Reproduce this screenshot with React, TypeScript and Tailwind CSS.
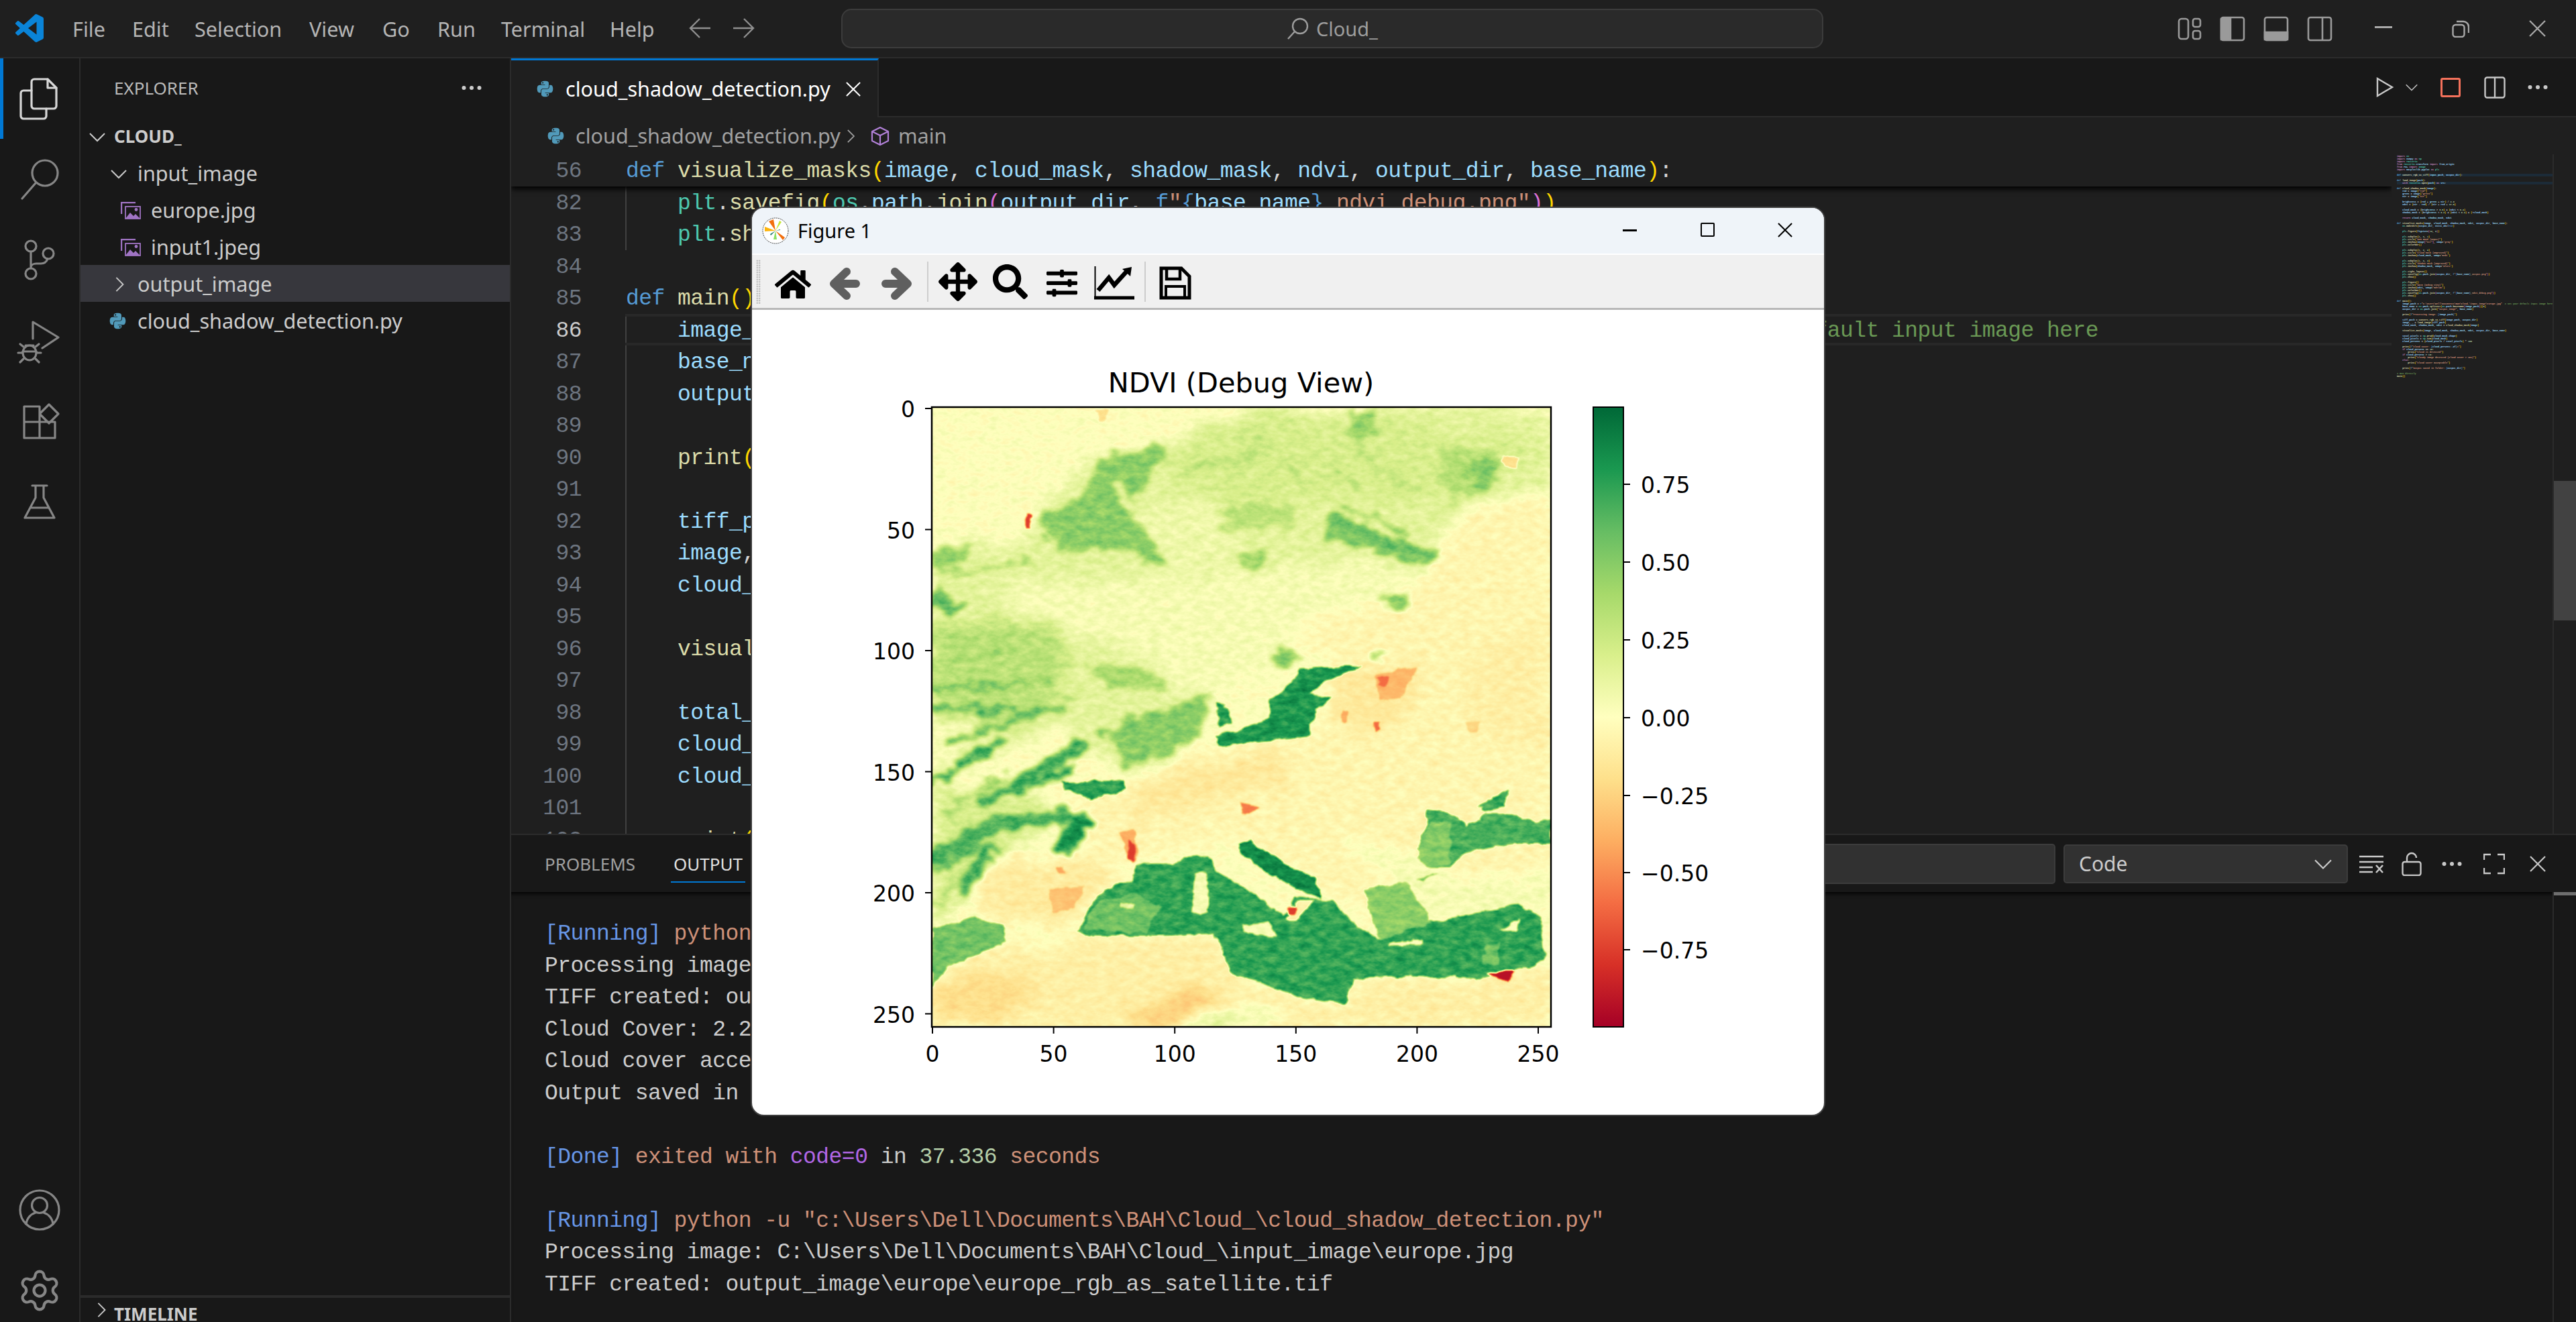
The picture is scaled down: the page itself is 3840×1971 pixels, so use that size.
import { FaPython, FaHome, FaArrowsAlt, FaSearch, FaSlidersH } from 'react-icons/fa';
import { Settings } from 'lucide-react';
import type { ReactNode } from 'react';

const minimapCode = `import os
import numpy as np
import rasterio
from rasterio.transform import from_origin
from PIL import Image
import matplotlib.pyplot as plt

def convert_rgb_to_tiff(input_path, output_dir):

def load_image(path):
    with rasterio.open(path) as src:

def cloud_shadow_mask(image):
    red = image["red"]
    green = image["green"]
    nir = image["nir"]

    brightness = (red + green + nir) / 3.0
    ndvi = (nir - red) / (nir + red + 1e-6)

    cloud_mask = (brightness > 0.8) & (ndvi < 0.2)
    shadow_mask = (brightness < 0.2) & (ndvi < 0.2) & (~cloud_mask)

    return cloud_mask, shadow_mask, ndvi

def visualize_masks(image, cloud_mask, shadow_mask, ndvi, output_dir, base_name):
    os.makedirs(output_dir, exist_ok=True)

    plt.figure(figsize=(12, 9))

    plt.subplot(1, 3, 1)
    plt.title("NIR Band (Input)")
    plt.imshow(image["nir"], cmap='gray')
    plt.colorbar()

    plt.subplot(1, 3, 2)
    plt.title("Cloud Mask (Improved)")
    plt.imshow(cloud_mask, cmap='Reds')

    plt.subplot(1, 3, 3)
    plt.title("Shadow Mask (Improved)")
    plt.imshow(shadow_mask, cmap='Blues')

    plt.tight_layout()
    plt.savefig(os.path.join(output_dir, f"{base_name}_output.png"))
    plt.show()

    plt.figure()
    plt.title("NDVI (Debug View)")
    plt.imshow(ndvi, cmap='RdYlGn')
    plt.colorbar()
    plt.savefig(os.path.join(output_dir, f"{base_name}_ndvi_debug.png"))
    plt.show()

def main():
    image_path = r"C:\\Users\\Dell\\Documents\\BAH\\Cloud_\\input_image\\europe.jpg"  # Set your default input image here
    base_name = os.path.splitext(os.path.basename(image_path))[0]
    output_dir = os.path.join("output_image", base_name)

    print(f"Processing image: {image_path}")

    tiff_path = convert_rgb_to_tiff(image_path, output_dir)
    image, _ = load_image(tiff_path)
    cloud_mask, shadow_mask, ndvi = cloud_shadow_mask(image)

    visualize_masks(image, cloud_mask, shadow_mask, ndvi, output_dir, base_name)

    total_pixels = np.prod(cloud_mask.shape)
    cloud_pixels = np.sum(cloud_mask)
    cloud_percent = (cloud_pixels / total_pixels) * 100

    print(f"Cloud Cover: {cloud_percent:.2f}%")
    if cloud_percent == 10:
        print("Cloud is detected")
    if cloud_percent > 10:
        print("Cloudy image detected (cloud cover > 10%)")
    else:
        print("Cloud cover acceptable")

    print(f"Output saved in folder: {output_dir}")

# Run directly
main()`.split('\n');

const codeRows: { n: number; t: string; guide?: boolean }[] = [
  { n: 82, t: '    plt.savefig(os.path.join(output_dir, f"{base_name}_ndvi_debug.png"))', guide: true },
  { n: 83, t: '    plt.show()', guide: true },
  { n: 84, t: '' },
  { n: 85, t: 'def main():' },
  { n: 86, t: '    image_path = r"C:\\Users\\Dell\\Documents\\BAH\\Cloud_\\input_image\\europe.jpg"  # Set your default input image here', guide: true },
  { n: 87, t: '    base_name = os.path.splitext(os.path.basename(image_path))[0]', guide: true },
  { n: 88, t: '    output_dir = os.path.join("output_image", base_name)', guide: true },
  { n: 89, t: '', guide: true },
  { n: 90, t: '    print(f"Processing image: {image_path}")', guide: true },
  { n: 91, t: '', guide: true },
  { n: 92, t: '    tiff_path = convert_rgb_to_tiff(image_path, output_dir)', guide: true },
  { n: 93, t: '    image, _ = load_image(tiff_path)', guide: true },
  { n: 94, t: '    cloud_mask, shadow_mask, ndvi = cloud_shadow_mask(image)', guide: true },
  { n: 95, t: '', guide: true },
  { n: 96, t: '    visualize_masks(image, cloud_mask, shadow_mask, ndvi, output_dir, base_name)', guide: true },
  { n: 97, t: '', guide: true },
  { n: 98, t: '    total_pixels = np.prod(cloud_mask.shape)', guide: true },
  { n: 99, t: '    cloud_pixels = np.sum(cloud_mask)', guide: true },
  { n: 100, t: '    cloud_percent = (cloud_pixels / total_pixels) * 100', guide: true },
  { n: 101, t: '', guide: true },
  { n: 102, t: '    print(f"Cloud Cover: {cloud_percent:.2f}%")', guide: true },
];

const KEYWORDS = ['import', 'from', 'with', 'as', 'return', 'if', 'else'];
const BRACKETS = ['text-[#ffd700]', 'text-[#da70d6]', 'text-[#179fff]'];

// small python colouriser, good enough for the editor and the minimap
function highlight(line: string): ReactNode[] {
  const out: ReactNode[] = [];
  const re = /(#.*$)|([fr]?"[^"]*"|'[^']*')|([A-Za-z_]\w*)|(\d+\.?\d*(?:e-?\d+)?)|([()[\]{}])|(\s+|.)/g;
  let depth = 0;
  let i = 0;
  let m: RegExpExecArray | null;
  while ((m = re.exec(line))) {
    const key = i++;
    if (m[1]) out.push(<span key={key} className="text-[#6a9955]">{m[1]}</span>);
    else if (m[2]) {
      const s = m[2];
      const prefix = s[0] === 'f' || s[0] === 'r' ? s[0] : '';
      const rest = s.slice(prefix.length);
      const parts = prefix === 'f' ? rest.split(/(\{[^}]*\})/) : [rest];
      out.push(
        <span key={key} className="text-[#ce9178]">
          {prefix && <span className="text-[#569cd6]">{prefix}</span>}
          {parts.map((p, j) =>
            p.startsWith('{') ? (
              <span key={j}>
                <span className="text-[#569cd6]">{'{'}</span>
                <span className="text-[#9cdcfe]">{p.slice(1, -1)}</span>
                <span className="text-[#569cd6]">{'}'}</span>
              </span>
            ) : (
              <span key={j}>{p}</span>
            ),
          )}
        </span>,
      );
    } else if (m[3]) {
      const w = m[3];
      const next = line[re.lastIndex];
      let cls = 'text-[#9cdcfe]';
      if (w === 'def' || w === 'True') cls = 'text-[#569cd6]';
      else if (KEYWORDS.includes(w)) cls = 'text-[#c586c0]';
      else if (w === 'plt' || w === 'np' || w === 'os' || w === 'rasterio' || w === 'Image') cls = 'text-[#4ec9b0]';
      else if (next === '(') cls = 'text-[#dcdcaa]';
      out.push(<span key={key} className={cls}>{w}</span>);
    } else if (m[4]) out.push(<span key={key} className="text-[#b5cea8]">{m[4]}</span>);
    else if (m[5]) {
      const open = '([{'.includes(m[5]);
      if (!open) depth--;
      out.push(<span key={key} className={BRACKETS[Math.abs(depth) % 3]}>{m[5]}</span>);
      if (open) depth++;
    } else out.push(<span key={key} className="text-[#d4d4d4]">{m[6]}</span>);
  }
  return out;
}

function PyIcon({ size = 'w-[27px] h-[27px]' }: { size?: string }) {
  return <FaPython className={`${size} text-[#519aba] shrink-0`} />;
}

function ImageIcon() {
  return (
    <svg viewBox="0 0 30 26" className="w-[30px] h-[26px] shrink-0" fill="none" stroke="#a074c4">
      <path d="M1 18V1H22" strokeWidth="2.4" />
      <rect x="7" y="7" width="22" height="18" strokeWidth="1.8" />
      <path d="M7 25l7-9 5 5 3-3 7 7z" fill="#a074c4" stroke="none" />
      <circle cx="23" cy="11.5" r="2.4" fill="#a074c4" stroke="none" />
    </svg>
  );
}

function Chevron({ dir, className }: { dir: 'down' | 'right'; className: string }) {
  return (
    <svg viewBox="0 0 24 24" className={`${className} shrink-0`} fill="none" stroke="currentColor" strokeWidth="2">
      {dir === 'down' ? <path d="M1 7l11 11L23 7" /> : <path d="M7 1l11 11L7 23" />}
    </svg>
  );
}

function Dots({ className }: { className: string }) {
  return (
    <svg viewBox="0 0 30 8" className={className} fill="currentColor">
      <circle cx="3.5" cy="4" r="3" />
      <circle cx="15" cy="4" r="3" />
      <circle cx="26.5" cy="4" r="3" />
    </svg>
  );
}

function CloseX({ className }: { className: string }) {
  return (
    <svg viewBox="0 0 24 24" className={className} fill="none" stroke="currentColor" strokeWidth="2.2">
      <path d="M1 1l22 22M23 1L1 23" />
    </svg>
  );
}

function ActivityIcon({ children, active }: { children: ReactNode; active?: boolean }) {
  return (
    <div className="h-[120px] flex items-center justify-center">
      <svg viewBox="0 0 70 70" className="w-[70px] h-[70px]" fill="none" stroke={active ? '#d7d7d7' : '#868686'} strokeWidth="3.2" strokeLinejoin="round" strokeLinecap="round">
        {children}
      </svg>
    </div>
  );
}

function ActivityBar() {
  return (
    <div className="w-[120px] shrink-0 flex flex-col bg-[#181818] border-r-2 border-[#2b2b2b] relative">
      <div className="absolute left-0 top-0 w-[5px] h-[120px] bg-[#0078d4]" />
      <ActivityIcon active>
        <path d="M27 6h20l13 13v27a4 4 0 0 1-4 4H27a4 4 0 0 1-4-4V10a4 4 0 0 1 4-4z" />
        <path d="M47 6v13h13" />
        <path d="M23 23H11a4 4 0 0 0-4 4v34a4 4 0 0 0 4 4h30a4 4 0 0 0 4-4V50" />
      </ActivityIcon>
      <ActivityIcon>
        <circle cx="43" cy="26" r="19" />
        <path d="M29 41L9 64" />
      </ActivityIcon>
      <ActivityIcon>
        <circle cx="22" cy="15" r="8" />
        <circle cx="48" cy="26" r="8" />
        <circle cx="22" cy="56" r="8" />
        <path d="M22 23v25M47 34c-2 5-5 7-10 7h-7c-4 0-8 2-8 6" />
      </ActivityIcon>
      <ActivityIcon>
        <path d="M25 33V8l38 23-24 16" />
        <ellipse cx="20" cy="54" rx="10" ry="11" />
        <path d="M11 45l-5-4M29 45l5-4M9 54H3M31 54h6M11 63l-5 5M29 63l5 5M14 43h12M10 52h20" />
      </ActivityIcon>
      <ActivityIcon>
        <path d="M12 14h23v47H12zM12 37h46v24H35M49 11l14 14-14 14-14-14z" />
      </ActivityIcon>
      <ActivityIcon>
        <path d="M24 12h22M29 12v18L13 60h44L41 30V12M21 45h28" />
      </ActivityIcon>
      <div className="mt-auto -mb-[13px]">
        <ActivityIcon>
          <circle cx="35" cy="35" r="29" />
          <circle cx="35" cy="28" r="11.5" />
          <path d="M15 56c1-9 7-15 14-17M55 56c-1-9-7-15-14-17" />
        </ActivityIcon>
        <div className="h-[120px] flex items-center justify-center">
          <Settings className="w-[68px] h-[68px] text-[#868686]" strokeWidth={1.5} />
        </div>
      </div>
    </div>
  );
}

function Sidebar() {
  return (
    <div className="w-[642px] shrink-0 flex flex-col bg-[#181818] border-r-2 border-[#2b2b2b] text-[#cccccc]">
      <div className="h-[88px] shrink-0 flex items-center pl-[50px] pr-[42px] justify-between text-[#bbbbbb] text-[26px]">
        <span>EXPLORER</span>
        <Dots className="w-[30px] h-[8px] text-[#cccccc]" />
      </div>
      <div className="h-[55px] flex items-center pl-[13px] text-[26px] font-bold pt-[2px]">
        <Chevron dir="down" className="w-[24px] h-[24px] mr-[13px]" />
        <span>CLOUD_</span>
      </div>
      <div className="h-[55px] flex items-center pl-[45px] pt-[2px]">
        <Chevron dir="down" className="w-[24px] h-[24px] mr-[16px]" />
        <span>input_image</span>
      </div>
      <div className="h-[55px] flex items-center pl-[60px] pt-[2px]">
        <ImageIcon />
        <span className="ml-[15px]">europe.jpg</span>
      </div>
      <div className="h-[55px] flex items-center pl-[60px] pt-[2px]">
        <ImageIcon />
        <span className="ml-[15px]">input1.jpeg</span>
      </div>
      <div className="h-[55px] flex items-center pl-[47px] pt-[2px] bg-[#37373d]">
        <Chevron dir="right" className="w-[22px] h-[22px] mr-[16px]" />
        <span>output_image</span>
      </div>
      <div className="h-[55px] flex items-center pl-[42px] pt-[2px]">
        <PyIcon />
        <span className="ml-[16px]">cloud_shadow_detection.py</span>
      </div>
      <div className="mt-auto h-[40px] shrink-0 border-t-4 border-[#2b2b2b] flex items-center pl-[20px] text-[26px] font-bold">
        <Chevron dir="right" className="w-[22px] h-[22px] mr-[8px]" />
        <span className="pt-[12px]">TIMELINE</span>
      </div>
    </div>
  );
}

function TitleBar() {
  const menu: [string, string][] = [
    ['File', 'w-[89px]'],
    ['Edit', 'w-[93px]'],
    ['Selection', 'w-[171px]'],
    ['View', 'w-[109px]'],
    ['Go', 'w-[82px]'],
    ['Run', 'w-[95px]'],
    ['Terminal', 'w-[162px]'],
    ['Help', 'w-[80px]'],
  ];
  return (
    <div className="h-[87px] shrink-0 flex items-center bg-[#1f1f1f] border-b-2 border-[#2b2b2b]">
      <div className="w-[1254px] shrink-0 flex items-center">
        <svg viewBox="0 0 24 24" className="w-[42px] h-[42px] ml-[23px] mr-[43px]" fill="#0a84d8">
          <path d="M23.15 2.587L18.21.21a1.494 1.494 0 0 0-1.705.29l-9.46 8.63-4.12-3.128a.999.999 0 0 0-1.276.057L.327 7.261A1 1 0 0 0 .326 8.74L3.899 12 .326 15.26a1 1 0 0 0 .001 1.479L1.65 17.94a.999.999 0 0 0 1.276.057l4.12-3.128 9.46 8.63a1.492 1.492 0 0 0 1.704.29l4.942-2.377A1.5 1.5 0 0 0 24 20.06V3.939a1.5 1.5 0 0 0-.85-1.352zm-5.146 14.861L10.826 12l7.178-5.448v10.896z" />
        </svg>
        {menu.map(([label, w]) => (
          <span key={label} className={`${w} text-[#b4b4b4] pt-[2px]`}>{label}</span>
        ))}
        <svg viewBox="0 0 100 34" className="w-[100px] h-[34px] ml-[38px]" fill="none" stroke="#8f8f8f" strokeWidth="2.4">
          <path d="M2 17h30M16 3L2 17l14 14M66 17h30M82 3l14 14-14 14" />
        </svg>
      </div>
      <div className="w-[1464px] h-[59px] shrink-0 flex items-center justify-center gap-[10px] bg-[#2a2a2a] border-2 border-[#3c3c3c] rounded-[15px] text-[#9d9d9d] text-[29px]">
        <svg viewBox="0 0 34 34" className="w-[34px] h-[34px]" fill="none" stroke="#9d9d9d" strokeWidth="2.4">
          <circle cx="20" cy="13" r="11" />
          <path d="M12 21L2 32" />
        </svg>
        <span>Cloud_</span>
      </div>
      <div className="flex-1 flex items-center justify-end text-[#a8a8a8]">
        <svg viewBox="0 0 260 40" className="w-[260px] h-[40px] mr-[3px]" fill="none" stroke="#9a9a9a" strokeWidth="2.6">
          <rect x="16" y="5" width="14" height="30" rx="4" />
          <rect x="37" y="5" width="11" height="12" rx="3" />
          <rect x="37" y="23" width="11" height="12" rx="3" />
          <rect x="79" y="3" width="34" height="34" rx="3" />
          <path d="M79 5h14v31H79z" fill="#9a9a9a" />
          <rect x="144" y="3" width="34" height="34" rx="3" />
          <path d="M144 25h34v11h-34z" fill="#9a9a9a" />
          <rect x="209" y="3" width="34" height="34" rx="3" />
          <path d="M230 3v34" />
        </svg>
        <div className="w-[115px] flex justify-center">
          <div className="w-[26px] h-[3px] bg-[#a8a8a8] mb-[4px]" />
        </div>
        <div className="w-[115px] flex justify-center">
          <svg viewBox="0 0 26 26" className="w-[26px] h-[26px]" fill="none" stroke="#a8a8a8" strokeWidth="2.4">
            <rect x="1.5" y="7" width="17" height="18" rx="4" />
            <path d="M7 2h10a8 8 0 0 1 8 8v9" />
          </svg>
        </div>
        <div className="w-[115px] flex justify-center">
          <CloseX className="w-[25px] h-[25px]" />
        </div>
      </div>
    </div>
  );
}

function TabBar() {
  return (
    <div className="h-[88px] shrink-0 flex bg-[#181818] border-b-2 border-[#2b2b2b]">
      <div className="w-[548px] h-[88px] flex items-center bg-[#1f1f1f] border-t-[3px] border-t-[#0078d4] border-r-2 border-r-[#2b2b2b] pl-[37px] text-white">
        <PyIcon />
        <span className="ml-[17px]">cloud_shadow_detection.py</span>
        <CloseX className="w-[22px] h-[22px] ml-[23px]" />
      </div>
      <div className="ml-auto flex items-center pr-[42px] text-[#c8c8c8]">
        <svg viewBox="0 0 26 30" className="w-[26px] h-[30px]" fill="none" stroke="currentColor" strokeWidth="2.4">
          <path d="M2 2l22 13L2 28z" />
        </svg>
        <Chevron dir="down" className="w-[18px] h-[18px] ml-[18px]" />
        <div className="w-[30px] h-[29px] ml-[34px] border-[3px] border-[#f4715b] rounded-[3px]" />
        <svg viewBox="0 0 32 33" className="w-[32px] h-[33px] ml-[35px]" fill="none" stroke="currentColor" strokeWidth="2.4">
          <rect x="1.5" y="1.5" width="29" height="30" rx="3" />
          <path d="M16 1v31" />
        </svg>
        <Dots className="w-[30px] h-[8px] ml-[33px]" />
      </div>
    </div>
  );
}

function Breadcrumb() {
  return (
    <div className="h-[55px] shrink-0 flex items-center pl-[53px] bg-[#1f1f1f] text-[#a0a0a0]">
      <PyIcon />
      <span className="ml-[16px]">cloud_shadow_detection.py</span>
      <Chevron dir="right" className="w-[20px] h-[20px] ml-[5px] text-[#a0a0a0]" />
      <svg viewBox="0 0 30 30" className="w-[30px] h-[30px] ml-[19px]" fill="none" stroke="#b180d7" strokeWidth="2.2" strokeLinejoin="round">
        <path d="M15 2l12 6v14l-12 6-12-6V8zM3 8l12 6 12-6M15 14v14" />
      </svg>
      <span className="ml-[12px]">main</span>
    </div>
  );
}

function CodeRow({ n, t, guide }: { n: number; t: string; guide?: boolean }) {
  const active = n === 86;
  return (
    <div className="h-[47.5px] flex items-center">
      <div className={`w-[105px] shrink-0 text-right pt-[4px] ${active ? 'text-[#cccccc]' : 'text-[#6e7681]'}`}>{n}</div>
      <div className={`ml-[65px] flex-1 h-full flex items-center whitespace-pre ${guide ? 'shadow-[inset_2px_0_0_#404040]' : ''} ${active ? 'border-y-[4px] border-[#282828]' : ''}`}>
        <span className="ml-[1px] pt-[4px]">{highlight(t)}</span>
      </div>
    </div>
  );
}

function Editor() {
  return (
    <div className="flex-1 min-h-0 flex bg-[#1f1f1f] font-['Liberation_Mono',monospace] text-[33px] tracking-[-0.55px]">
      <div className="flex-1 min-w-0 overflow-hidden relative">
        <div className="relative z-10 bg-[#1f1f1f] shadow-[0_4px_8px_#000]">
          <CodeRow n={56} t="def visualize_masks(image, cloud_mask, shadow_mask, ndvi, output_dir, base_name):" />
        </div>
        {codeRows.map((r) => (
          <CodeRow key={r.n} {...r} />
        ))}
      </div>
      <div className="w-[240px] shrink-0 pl-[8px] pt-[1px] overflow-hidden text-[3.4px] tracking-normal font-bold">
        {minimapCode.map((line, i) => (
          <div key={i} className={`h-[4px] leading-[4px] whitespace-pre ${i === 7 || i === 10 ? 'bg-[#1c2b38]' : ''}`}>
            {highlight(line)}
          </div>
        ))}
      </div>
      <div className="w-[35px] shrink-0 border-l-2 border-[#2b2b2b] pt-[487px]">
        <div className="h-[208px] bg-[#424242]" />
      </div>
    </div>
  );
}

function OutRun({ cmd }: { cmd: string }) {
  return (
    <div className="h-[47.5px] leading-[47.5px]">
      <span className="text-[#6796e6]">[Running]</span> <span className="text-[#ce9178]">{cmd}</span>
    </div>
  );
}

function OutLine({ t }: { t: string }) {
  return <div className="h-[47.5px] leading-[47.5px]">{t}</div>;
}

function Panel() {
  const cmd = 'python -u "c:\\Users\\Dell\\Documents\\BAH\\Cloud_\\cloud_shadow_detection.py"';
  return (
    <div className="h-[728px] shrink-0 flex flex-col bg-[#181818] border-t-2 border-[#2b2b2b]">
      <div className="h-[85px] shrink-0 flex items-center pl-[50px] text-[26px] text-[#a0a0a0]">
        <span className="pt-[2px]">PROBLEMS</span>
        <div className="ml-[57px] h-[85px] flex items-center relative text-[#e0e0e0]">
          <span className="pt-[2px]">OUTPUT</span>
          <div className="absolute -left-[4px] -right-[4px] top-[69px] h-[2px] bg-[#0078d4]" />
        </div>
        <div className="ml-auto flex items-center text-[#c8c8c8]">
          <div className="w-[500px] h-[60px] bg-[#313131] border-2 border-[#3c3c3c] rounded-[5px]" />
          <div className="ml-[12px] w-[424px] h-[58px] flex items-center justify-between pl-[21px] pr-[22px] bg-[#313131] border-2 border-[#3c3c3c] rounded-[5px] text-[30px] text-[#cccccc]">
            <span>Code</span>
            <Chevron dir="down" className="w-[26px] h-[26px]" />
          </div>
          <svg viewBox="0 0 36 28" className="w-[36px] h-[28px] ml-[17px]" fill="none" stroke="currentColor" strokeWidth="2.6">
            <path d="M0 3h36M0 11h36M0 19h20M0 26h20M25 16l10 11M35 16L25 27" />
          </svg>
          <svg viewBox="0 0 30 36" className="w-[30px] h-[36px] ml-[27px]" fill="none" stroke="currentColor" strokeWidth="2.4">
            <rect x="1.5" y="15" width="27" height="20" rx="3" />
            <path d="M8 15V9a7 7 0 0 1 14 0" />
          </svg>
          <Dots className="w-[30px] h-[8px] ml-[30px]" />
          <svg viewBox="0 0 32 32" className="w-[32px] h-[32px] ml-[32px]" fill="none" stroke="currentColor" strokeWidth="2.4">
            <path d="M1 10V2h10M21 2h10v8M31 22v8H21M11 30H1v-8" />
          </svg>
          <CloseX className="w-[24px] h-[24px] ml-[37px] mr-[45px]" />
        </div>
      </div>
      <div className="flex-1 min-h-0 flex overflow-hidden shadow-[inset_0_6px_6px_-4px_#000]">
        <div className="flex-1 min-w-0 pl-[50px] pt-[39px] font-['Liberation_Mono',monospace] text-[33px] tracking-[-0.55px] text-[#cccccc] whitespace-pre overflow-hidden">
          <OutRun cmd={cmd} />
          <OutLine t="Processing image: C:\Users\Dell\Documents\BAH\Cloud_\input_image\europe.jpg" />
          <OutLine t="TIFF created: output_image\europe\europe_rgb_as_satellite.tif" />
          <OutLine t="Cloud Cover: 2.27%" />
          <OutLine t="Cloud cover acceptable" />
          <OutLine t="Output saved in folder: output_image\europe" />
          <OutLine t="" />
          <div className="h-[47.5px] leading-[47.5px]">
            <span className="text-[#6796e6]">[Done]</span> <span className="text-[#ce9178]">exited with</span>{' '}
            <span className="text-[#b267e6]">code=0</span> <span className="text-[#cccccc]">in</span>{' '}
            <span className="text-[#b5cea8]">37.336</span> <span className="text-[#ce9178]">seconds</span>
          </div>
          <OutLine t="" />
          <OutRun cmd={cmd} />
          <OutLine t="Processing image: C:\Users\Dell\Documents\BAH\Cloud_\input_image\europe.jpg" />
          <OutLine t="TIFF created: output_image\europe\europe_rgb_as_satellite.tif" />
        </div>
        <div className="w-[35px] shrink-0 border-l-2 border-[#2b2b2b]">
          <div className="h-[5px] bg-[#6e6e6e]" />
        </div>
      </div>
    </div>
  );
}

// the map is drawn as an ndvi field in grey (0 = -1, 1 = +1), a filter then maps grey to RdYlGn.
// shapes are in the pixel grid of a crop of the plot: x 112-1270, y 90-1538
type Shape = [number, string];
const grey = (v: number) => {
  const c = Math.round(v * 255);
  return `rgb(${c},${c},${c})`;
};

const broad: Shape[] = [
  [0.47, '1270,290 1100,330 1010,520 830,590 800,640 900,690 820,850 650,880 480,950 380,1000 360,1040 410,1110 420,1155 680,1100 850,1210 950,1310 1020,1260 1150,1290 1270,1240'],
  [0.43, '880,700 1030,690 1000,800 900,860 850,800'],
  [0.45, '1270,560 1100,700 1150,860 1270,880'],
  [0.43, '500,960 760,880 780,960 620,1020 480,1080'],
  [0.44, '190,1210 230,1140 400,1150 480,1170 410,1240 370,1300 250,1300 200,1270'],
  [0.45, '112,1440 200,1350 400,1330 640,1320 660,1400 790,1470 880,1490 900,1430 1130,1430 1270,1400 1270,1538 112,1538'],
  [0.37, '470,1538 500,1500 620,1450 660,1480 560,1538'],
  [0.4, '112,1538 130,1430 280,1400 300,1500 200,1538'],
  [0.58, '560,1538 640,1490 780,1500 700,1538'],
  [0.52, '1020,1260 1000,1210 920,1150 880,1100 960,1120 1060,1180 1150,1200 1270,1170 1270,1240 1150,1290'],
  [0.57, '112,420 300,400 320,300 420,215 540,180 630,130 750,95 1270,95 1270,290 1100,320 1030,470 960,530 810,590 780,640 640,760 600,880 480,950 380,870 300,850 210,920 112,960'],
  [0.6, '620,130 890,95 1270,180 1100,320 900,300 700,330 560,300 540,190'],
  [0.52, '230,520 420,490 620,490 800,460 1000,450 1010,490 960,530 810,590 780,640 650,750 570,760 500,650 330,620'],
  [0.54, '500,330 640,300 700,420 560,520 500,430'],
  [0.66, '112,600 300,600 380,700 340,780 230,840 112,810'],
  [0.49, '300,850 360,830 395,870 380,910 430,950 470,950 400,985 360,940 340,890'],
  [0.52, '112,830 190,820 210,880 112,950'],
  [0.6, '112,980 300,1000 350,1030 112,1300'],
];

const mid: Shape[] = [
  [0.74, '530,180 540,200 490,300 500,370 540,430 470,425 340,425 320,340 400,285 430,215 470,200'],
  [0.56, '445,255 462,255 495,325 480,330'],
  [0.74, '490,410 530,420 565,450 510,465'],
  [0.7, '680,430 745,425 715,470 680,450'],
  [0.65, '640,370 700,330 790,320 780,370 690,380'],
  [0.76, '840,340 960,390 1060,420 1060,450 1020,455 950,430 850,395'],
  [0.67, '1060,180 1170,200 1165,290 1115,300 1060,260'],
  [0.75, '1115,210 1172,220 1150,285 1120,260'],
  [0.72, '890,95 940,100 940,150 905,165'],
  [0.72, '112,430 190,415 170,450 112,475'],
  [0.8, '112,515 180,545 150,575 112,555'],
  [0.69, '400,690 520,700 560,750 450,745'],
  [0.74, '450,840 520,800 640,760 600,880 500,930 470,945'],
  [0.74, '745,700 770,645 795,660 795,700'],
  [0.7, '930,660 960,655 965,685 935,690'],
  [0.74, '950,530 1010,520 995,570 960,555'],
];

const streaks: [number, number, string][] = [
  [0.8, 22, '860,345 950,400 1050,440'],
  [0.72, 12, '880,325 1000,380'],
  [0.7, 10, '960,250 1020,290'],
  [0.66, 14, '650,340 780,320'],
  [0.76, 16, '112,750 330,730'],
  [0.82, 14, '112,790 300,800'],
  [0.7, 10, '112,630 280,620'],
  [0.72, 10, '112,690 260,660'],
  [0.78, 16, '150,870 350,790'],
  [0.66, 10, '240,690 380,780'],
  [0.76, 12, '430,860 600,790'],
  [0.85, 18, '112,965 240,872'],
  [0.86, 26, '210,1010 300,950 390,880'],
  [0.88, 18, '270,990 380,930'],
  [0.84, 30, '120,1140 235,1060 390,1045'],
  [0.84, 16, '120,1175 205,1105'],
  [0.86, 26, '170,1210 222,1125'],
  [0.7, 12, '130,1040 250,950'],
  [0.68, 8, '120,1250 180,1180'],
  [0.92, 36, '360,1120 390,1060'],
  [0.65, 14, '700,140 800,260'],
  [0.64, 16, '900,180 1000,280'],
  [0.66, 18, '600,230 720,200'],
  [0.7, 8, '860,230 900,270'],
  [0.68, 14, '130,480 300,450'],
  [0.66, 12, '200,570 330,640'],
];

const sharp: Shape[] = [
  [0.9, '745,770 780,740 800,700 920,695 850,730 815,760 860,770 830,800 815,860 700,875 650,882 640,860 700,840 740,820'],
  [0.88, '645,780 665,800 675,830 650,835'],
  [0.88, '355,965 470,960 475,985 410,1005 360,985'],
  [0.78, '112,1310 190,1280 245,1300 250,1340 140,1400 112,1450'],
  [0.84, '1040,1030 1090,1040 1110,1070 1150,1040 1200,1040 1240,1060 1270,1050 1270,1110 1200,1110 1110,1130 1080,1165 1040,1165 1018,1140 1030,1090'],
  [0.75, '1040,1060 1085,1060 1080,1160 1040,1165 1018,1140'],
  [0.86, '1132,1022 1190,985 1182,1022 1150,1035'],
  [0.76, '1020,1192 1060,1180 1030,1198'],
  [0.87, '385,1315 410,1250 440,1215 490,1195 495,1158 560,1158 600,1140 630,1135 645,1175 700,1215 770,1280 790,1235 825,1240 860,1245 905,1300 950,1335 1050,1290 1120,1275 1210,1250 1250,1280 1258,1380 1240,1395 1140,1425 1000,1420 900,1425 885,1485 860,1480 790,1465 670,1410 650,1340 640,1320 560,1325 400,1325'],
  [0.78, '395,1310 420,1250 490,1225 540,1260 510,1320'],
  [0.74, '920,1215 1000,1200 1040,1280 1050,1295 950,1335 930,1270'],
  [0.77, '1145,1350 1175,1340 1170,1390 1145,1395'],
  [0.93, '685,1110 710,1103 760,1150 830,1190 842,1240 790,1212 730,1170 690,1130'],
  [0.52, '605,1180 625,1178 632,1270 598,1272'],
  [0.51, '690,1300 745,1295 757,1330 700,1318'],
  [0.54, '462,1250 490,1248 488,1260 465,1260'],
  [0.5, '965,1340 1030,1335 1030,1345 965,1348'],
  [0.5, '1175,1312 1210,1285 1206,1312'],
  [0.46, '775,1290 795,1245 825,1245 795,1290'],
  [0.12, '288,340 298,340 296,372 288,372'],
  [0.3, '462,1080 490,1080 500,1120 490,1150 475,1130'],
  [0.12, '480,1100 495,1110 488,1150 480,1145'],
  [0.34, '330,1215 400,1210 380,1260 340,1270'],
  [0.3, '345,1165 362,1165 360,1180 348,1180'],
  [0.32, '940,715 1020,695 990,770 950,775'],
  [0.2, '945,720 965,720 960,745 950,745'],
  [0.3, '880,800 890,800 888,825 880,825'],
  [0.2, '938,825 950,825 948,845 938,845'],
  [0.22, '690,1015 725,1025 695,1042'],
  [0.12, '775,1255 792,1255 790,1275 778,1275'],
  [0.04, '1150,1415 1190,1405 1205,1405 1190,1438 1170,1425'],
  [0.38, '1110,825 1140,825 1135,850 1115,850'],
  [0.4, '420,95 440,95 435,125 425,125'],
  [0.4, '1180,205 1210,205 1205,230 1185,230'],
];

const cbarTicks: [number, string][] = [
  [722, '0.75'],
  [838, '0.50'],
  [954, '0.25'],
  [1070, '0.00'],
  [1186, '−0.25'],
  [1301, '−0.50'],
  [1416, '−0.75'],
];

function Plot() {
  const ticks = [0, 50, 100, 150, 200, 250];
  return (
    <svg viewBox="1121 462 1598 1200" className="w-[1598px] h-[1200px] block" fontFamily="'DejaVu Sans', sans-serif" fill="#000">
      <defs>
        <linearGradient id="rdylgn" x1="0" y1="0" x2="0" y2="1">
          <stop offset="0" stopColor="#006837" />
          <stop offset="0.1" stopColor="#1a9850" />
          <stop offset="0.2" stopColor="#66bd63" />
          <stop offset="0.3" stopColor="#a6d96a" />
          <stop offset="0.4" stopColor="#d9ef8b" />
          <stop offset="0.5" stopColor="#ffffbf" />
          <stop offset="0.6" stopColor="#fee08b" />
          <stop offset="0.7" stopColor="#fdae61" />
          <stop offset="0.8" stopColor="#f46d43" />
          <stop offset="0.9" stopColor="#d73027" />
          <stop offset="1" stopColor="#a50026" />
        </linearGradient>
        <filter id="soft" x="-5%" y="-5%" width="110%" height="110%" colorInterpolationFilters="sRGB">
          <feTurbulence type="fractalNoise" baseFrequency="0.016" numOctaves="5" seed="4" />
          <feDisplacementMap in="SourceGraphic" scale="80" xChannelSelector="R" yChannelSelector="G" />
          <feGaussianBlur stdDeviation="14" />
        </filter>
        <filter id="mid" x="-5%" y="-5%" width="110%" height="110%" colorInterpolationFilters="sRGB">
          <feTurbulence type="fractalNoise" baseFrequency="0.03" numOctaves="5" seed="9" />
          <feDisplacementMap in="SourceGraphic" scale="50" xChannelSelector="R" yChannelSelector="G" />
          <feGaussianBlur stdDeviation="5" />
        </filter>
        <filter id="sharp" x="-5%" y="-5%" width="110%" height="110%" colorInterpolationFilters="sRGB">
          <feTurbulence type="fractalNoise" baseFrequency="0.04" numOctaves="3" seed="2" />
          <feDisplacementMap in="SourceGraphic" scale="15" xChannelSelector="R" yChannelSelector="G" />
          <feGaussianBlur stdDeviation="1.4" />
        </filter>
        <filter id="ndvi" x="0" y="0" width="100%" height="100%" colorInterpolationFilters="sRGB">
          <feTurbulence type="fractalNoise" baseFrequency="0.05 0.07" numOctaves="3" seed="21" result="noise" />
          <feColorMatrix in="noise" values="1 0 0 0 0  1 0 0 0 0  1 0 0 0 0  0 0 0 0 1" result="noiseGrey" />
          <feComposite in="SourceGraphic" in2="noiseGrey" operator="arithmetic" k1="0.2" k2="0.9" k3="0" k4="0" result="field" />
          <feComponentTransfer in="field">
            <feFuncR type="table" tableValues="0.647 0.843 0.957 0.992 0.996 1 0.851 0.651 0.4 0.102 0" />
            <feFuncG type="table" tableValues="0 0.188 0.427 0.682 0.878 1 0.937 0.851 0.741 0.596 0.408" />
            <feFuncB type="table" tableValues="0.149 0.153 0.263 0.38 0.545 0.749 0.545 0.416 0.388 0.314 0.216" />
          </feComponentTransfer>
        </filter>
      </defs>
      <svg x="1389" y="607" width="923" height="924" viewBox="112 90 1158 1448" preserveAspectRatio="none">
        <g filter="url(#ndvi)">
          <rect x="112" y="90" width="1158" height="1448" fill={grey(0.5)} />
          <g filter="url(#soft)">
            {broad.map(([v, p], i) => <polygon key={i} fill={grey(v)} points={p} />)}
          </g>
          <g filter="url(#mid)">
            {mid.map(([v, p], i) => <polygon key={i} fill={grey(v)} points={p} />)}
            {streaks.map(([v, w, p], i) => <polyline key={i} fill="none" stroke={grey(v)} strokeWidth={w} strokeLinecap="round" points={p} />)}
          </g>
          <g filter="url(#sharp)">
            {sharp.map(([v, p], i) => <polygon key={i} fill={grey(v)} points={p} />)}
          </g>
        </g>
      </svg>
      <rect x="1389" y="607" width="923" height="924" fill="none" stroke="#000" strokeWidth="2.5" />
      <text x="1850" y="585" fontSize="41.5" textAnchor="middle">NDVI (Debug View)</text>
      {ticks.map((t, i) => {
        const y = 609 + i * 180.5;
        const x = 1390 + i * 180.6;
        return (
          <g key={t}>
            <line x1="1379" x2="1389" y1={y} y2={y} stroke="#000" strokeWidth="2" />
            <text x="1364" y={y + 13} fontSize="33" textAnchor="end">{t}</text>
            <line x1={x} x2={x} y1="1531" y2="1541" stroke="#000" strokeWidth="2" />
            <text x={x} y="1583" fontSize="33" textAnchor="middle">{t}</text>
          </g>
        );
      })}
      <rect x="2375" y="607" width="45" height="924" fill="url(#rdylgn)" stroke="#000" strokeWidth="2" />
      {cbarTicks.map(([y, label]) => (
        <g key={label}>
          <line x1="2420" x2="2430" y1={y} y2={y} stroke="#000" strokeWidth="2" />
          <text x="2446" y={y + 13} fontSize="33">{label}</text>
        </g>
      ))}
    </svg>
  );
}

function FigureWindow() {
  return (
    <div className="absolute left-[1119px] top-[308px] w-[1602px] h-[1356px] border-2 border-[#3f3f3f] rounded-[20px] overflow-hidden bg-white text-black flex flex-col">
      <div className="h-[68px] shrink-0 bg-[#eff4f9] flex items-center relative">
        <svg viewBox="0 0 40 40" className="w-[40px] h-[40px] ml-[15px]">
          <circle cx="20" cy="20" r="19" fill="#fff" stroke="#444" strokeWidth="1" strokeDasharray="2 1" />
          <path d="M20 20L10 6l7-3zM20 20l14 10-3 4z" fill="#f26f0f" />
          <path d="M20 20L4 14l0 7z" fill="#fdb40c" />
          <path d="M20 20l6-15 3 2z" fill="#c8e83a" />
          <path d="M20 20l-3 13 5 0z" fill="#8ce063" />
          <path d="M20 20l-8 5 1 2zM20 20l7-2 0 1z" fill="#1e7a6a" />
        </svg>
        <span className="ml-[13px] text-[29px]">Figure 1</span>
        <div className="absolute left-[1298px] top-[32px] w-[21px] h-[3px] bg-black" />
        <div className="absolute left-[1414px] top-[22px] w-[21px] h-[21px] border-2 border-black rounded-[2px]" />
        <CloseX className="absolute left-[1529px] top-[22px] w-[22px] h-[22px]" />
      </div>
      <div className="h-[2px] shrink-0 bg-white" />
      <div className="h-[79px] shrink-0 bg-[#f0f0f0] flex items-center pl-[6px]">
        <div className="w-[7px] h-[66px] shrink-0 bg-[radial-gradient(#b5b5b5_1px,transparent_1.5px)] bg-[length:3.5px_3.5px]" />
        <div className="w-[77.5px] ml-[9px] flex justify-center"><FaHome className="w-[54px] h-[48px] mt-[8px]" /></div>
        <div className="w-[77.5px] flex justify-center">
          <svg viewBox="0 0 46 50" className="w-[46px] h-[50px] mt-[6px]" fill="none" stroke="#5f5f5f" strokeWidth="12" strokeLinecap="round" strokeLinejoin="round">
            <path d="M40 25H12M26 7L7 25l19 18" />
          </svg>
        </div>
        <div className="w-[77.5px] flex justify-center">
          <svg viewBox="0 0 46 50" className="w-[46px] h-[50px] mt-[6px]" fill="none" stroke="#5f5f5f" strokeWidth="12" strokeLinecap="round" strokeLinejoin="round">
            <path d="M6 25h28M20 7l19 18-19 18" />
          </svg>
        </div>
        <div className="w-[2px] h-[60px] mx-[6px] bg-[#cdcdcd]" />
        <div className="w-[77.5px] flex justify-center"><FaArrowsAlt className="w-[58px] h-[58px]" /></div>
        <div className="w-[77.5px] flex justify-center"><FaSearch className="w-[52px] h-[52px]" /></div>
        <div className="w-[77.5px] flex justify-center"><FaSlidersH className="w-[50px] h-[46px] mt-[4px]" /></div>
        <div className="w-[77.5px] flex justify-center">
          <svg viewBox="0 0 60 50" className="w-[60px] h-[50px] mt-[4px]" fill="none" stroke="#000">
            <path d="M1.5 0v48" strokeWidth="2" />
            <path d="M0 47h60" strokeWidth="5" />
            <path d="M6 36l16-19 8 11 20-22" strokeWidth="6.5" />
            <path d="M42 4l14-3-2 14z" fill="#000" stroke="none" />
          </svg>
        </div>
        <div className="w-[2px] h-[60px] mx-[6px] bg-[#cdcdcd]" />
        <div className="w-[77.5px] flex justify-center">
          <svg viewBox="0 0 48 50" className="w-[48px] h-[50px] mt-[4px]" fill="none" stroke="#000" strokeWidth="5">
            <path d="M3 3h30l12 12v32H3z" />
            <path d="M11 3v16h20V3" strokeWidth="4.5" />
            <path d="M10 47V30h28v17" strokeWidth="4" />
          </svg>
        </div>
      </div>
      <div className="h-[3px] shrink-0 bg-[#b8b8b8]" />
      <Plot />
    </div>
  );
}

export default function App() {
  return (
    <div className="relative w-[3840px] h-[1971px] overflow-hidden flex flex-col bg-[#181818] font-['Noto_Sans',sans-serif] text-[30.6px] text-[#cccccc]">
      <TitleBar />
      <div className="flex-1 min-h-0 flex">
        <ActivityBar />
        <Sidebar />
        <div className="flex-1 min-w-0 flex flex-col">
          <TabBar />
          <Breadcrumb />
          <Editor />
          <Panel />
        </div>
      </div>
      <FigureWindow />
    </div>
  );
}
